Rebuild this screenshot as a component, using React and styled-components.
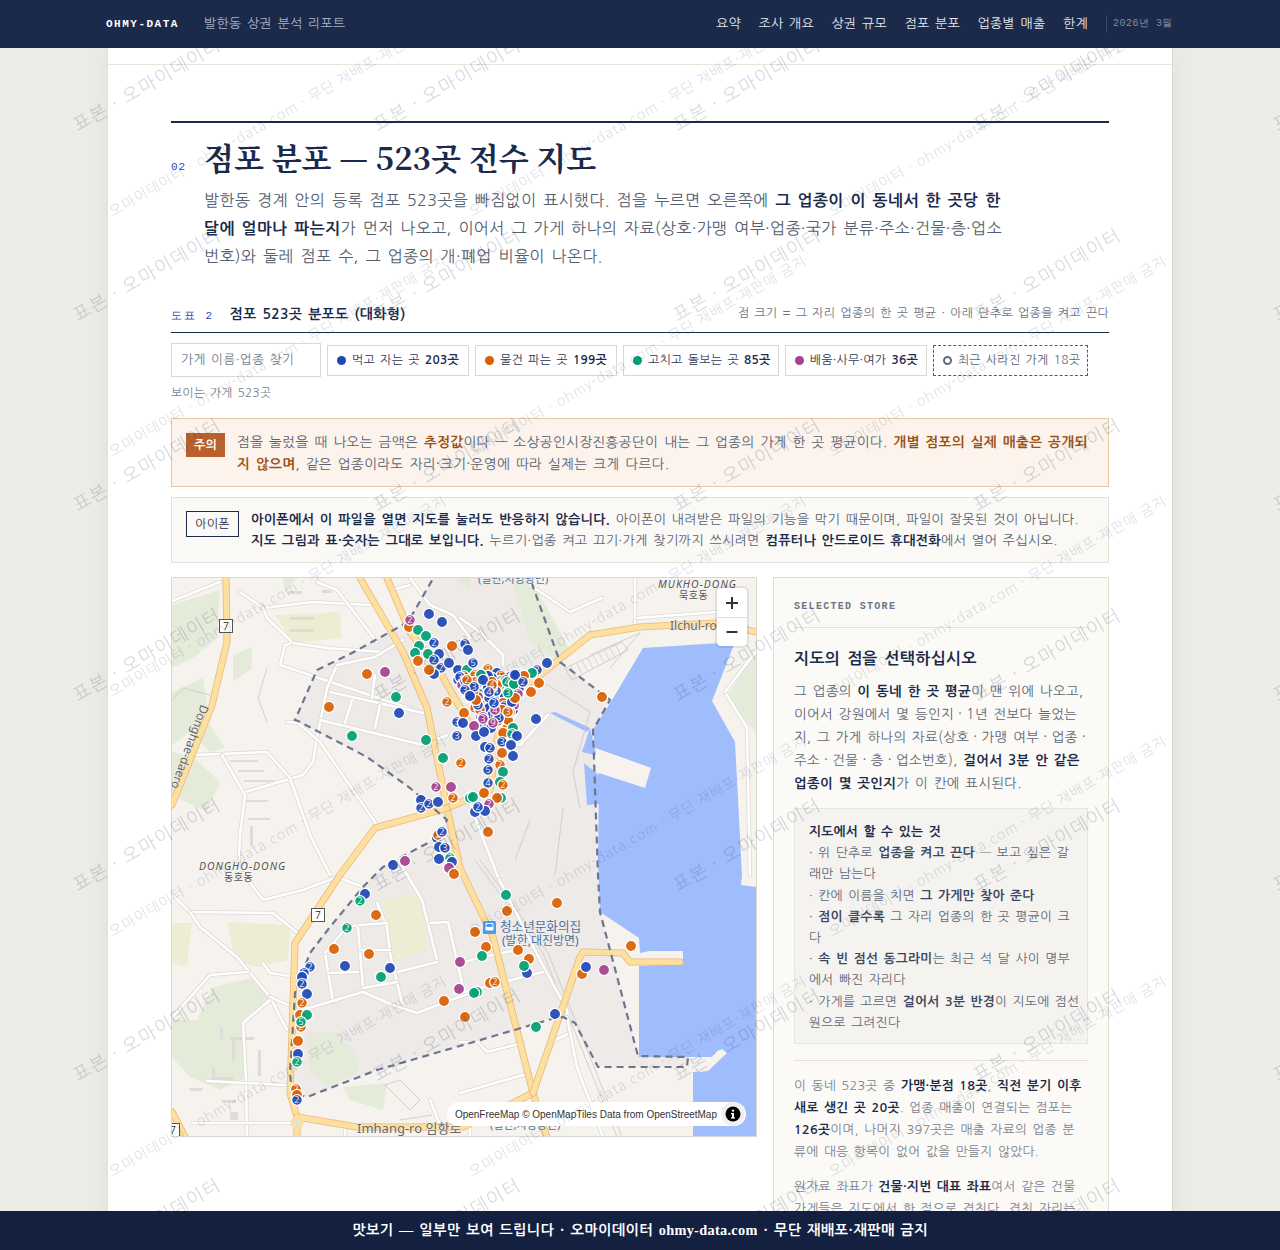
import React from 'react';
import styled, { createGlobalStyle } from 'styled-components';

const SANS = `"NanumGothic", "Liberation Sans", sans-serif`;
const SERIF = `"Liberation Serif", "NanumGothic", serif`;
const DISPLAY = `"Noto Serif CJK KR", "Liberation Serif", serif`;
const MONO = `"Liberation Mono", monospace`;

const NAVY = '#1b2a4a';
const COLORS = { b: '#1f48b6', o: '#d95f02', g: '#009e73', p: '#a6408f' };

const Global = createGlobalStyle`
	html, body {
		margin: 0;
		height: 100%;
		overflow: hidden;
		background: #eeece6;
		font-family: ${SANS};
		color: #4a5568;
	}
	* { box-sizing: border-box; }
	*:not(svg, svg *) {
		letter-spacing: 0.022em;
		word-spacing: 0.12em;
	}
	svg { letter-spacing: 0; word-spacing: 0; }
	b, strong { line-height: 1; }
`;

const TopBar = styled.header`
	position: relative;
	z-index: 60;
	height: 48px;
	background: ${NAVY};
	display: flex;
	align-items: center;
	padding: 0 107px 0 106px;
`;

const Brand = styled.div`
	font-family: ${MONO};
	font-weight: 700;
	font-size: 11px;
	letter-spacing: 1.5px;
	word-spacing: 0;
	color: #fff;
	width: 98px;
`;

const ReportName = styled.div`
	font-size: 13px;
	color: #a9b3c7;
	flex: 1;
`;

const Nav = styled.nav`
	display: flex;
	gap: 17.5px;
	font-size: 13px;
	color: #e3e7ef;
`;

const Issue = styled.div`
	font-family: ${MONO};
	font-size: 10px;
	letter-spacing: 0.5px;
	word-spacing: 0;
	color: #7f8aa3;
	margin-left: 18px;
	padding-left: 6px;
	border-left: 1px solid #3a4866;
	height: 18px;
	line-height: 18px;
	white-space: nowrap;
`;

const Sheet = styled.main`
	width: 1066px;
	margin: 0 auto;
	background: #fff;
	border-left: 1px solid #e2dfd6;
	border-right: 1px solid #dcd9d0;
	box-shadow: 0 0 30px rgba(40, 40, 30, 0.06);
	height: 1400px;
`;

const CoverStrip = styled.div`
	height: 17px;
	border-bottom: 1px solid #e8e4da;
`;

const Section = styled.section`
	margin: 56px 63px 0;
	border-top: 2px solid ${NAVY};
`;

const HeadRow = styled.div`
	display: flex;
	align-items: baseline;
	margin-top: 12px;
`;

const SecNo = styled.span`
	font-family: ${MONO};
	font-size: 11px;
	letter-spacing: 1px;
	color: #1f48b6;
	width: 33px;
`;

const Title = styled.h2`
	margin: 0;
	font-family: ${DISPLAY};
	font-size: 31px;
	line-height: 44px;
	font-weight: 700;
	letter-spacing: 0;
	word-spacing: 0;
	color: ${NAVY};
`;

const Lead = styled.p`
	margin: 7px 0 0 33px;
	width: 804px;
	font-size: 16px;
	line-height: 28px;
	color: #555f70;
	b { color: ${NAVY}; font-weight: 700; }
`;

const FigHead = styled.div`
	display: flex;
	align-items: center;
	justify-content: space-between;
	margin-top: 29px;
	height: 34px;
	padding-bottom: 5px;
	border-bottom: 1px solid ${NAVY};
`;

const FigNo = styled.span`
	font-family: ${MONO};
	font-size: 11px;
	letter-spacing: 1.5px;
	color: #1f48b6;
	margin-right: 16px;
`;

const FigTitle = styled.span`
	font-size: 14px;
	font-weight: 700;
	color: ${NAVY};
`;

const FigNote = styled.span`
	font-size: 12px;
	color: #6b7484;
`;

const Controls = styled.div`
	display: flex;
	align-items: center;
	gap: 6px;
	margin-top: 10px;
`;

const Search = styled.input`
	width: 150px;
	height: 34px;
	padding: 0 9px;
	border: 1px solid #dcd8cf;
	background: #fff;
	font-family: ${SANS};
	font-size: 12.8px;
	&::placeholder { color: #757d8b; }
`;

const Chip = styled.button`
	display: flex;
	align-items: center;
	gap: 6px;
	min-width: 142px;
	height: 31px;
	padding: 0 7px 0 9px;
	border: 1px ${p => (p.$dashed ? 'dashed #4f5a70' : 'solid #dcd8cf')};
	background: #fff;
	font-family: ${SANS};
	font-size: 12px;
	color: ${p => (p.$dashed ? '#5a6475' : '#2b3854')};
	white-space: nowrap;
`;

const Count = styled.strong`
	font-weight: 700;
	color: ${NAVY};
`;

const Dot = styled.i`
	width: 9px;
	height: 9px;
	border-radius: 50%;
	background: ${p => p.$color};
`;

const RingDot = styled.i`
	width: 9px;
	height: 9px;
	border-radius: 50%;
	border: 2px solid #606a7d;
`;

const Visible = styled.div`
	margin-top: 8px;
	font-size: 11.8px;
	line-height: 16px;
	color: #7a8290;
`;

const Notice = styled.div`
	display: flex;
	align-items: flex-start;
	gap: 12px;
	padding: 11px 14px;
	padding-top: ${p => (p.$warn ? '12px' : '11px')};
	border: 1px solid ${p => (p.$warn ? '#e6c8a8' : '#e5e1d8')};
	background: ${p => (p.$warn ? '#fbf3ec' : '#faf9f6')};
	font-size: ${p => (p.$warn ? '13.7px' : '13.15px')};
	line-height: ${p => (p.$warn ? '22px' : '21px')};
	margin-top: ${p => (p.$warn ? '17px' : '10px')};
	color: #5a6373;
	b { font-weight: 700; color: ${p => (p.$warn ? '#9a4f14' : NAVY)}; }
`;

const WarnTag = styled.span`
	flex: none;
	margin-top: 2px;
	width: 39px;
	height: 24px;
	line-height: 24px;
	text-align: center;
	background: #b8612c;
	color: #fff;
	font-weight: 700;
	font-size: 12px;
`;

const PhoneTag = styled.span`
	flex: none;
	margin-top: 2px;
	width: 53px;
	height: 26px;
	line-height: 24px;
	text-align: center;
	border: 1px solid ${NAVY};
	color: ${NAVY};
	font-size: 12px;
`;

const Grid = styled.div`
	display: grid;
	grid-template-columns: 586px 336px;
	gap: 16px;
	margin-top: 14px;
	align-items: start;
`;

const MapFrame = styled.div`
	position: relative;
	width: 586px;
	height: 560px;
	border: 1px solid #dcd8cf;
	overflow: hidden;
	background: #f6f3ef;
	svg { display: block; }
`;

const ZoomBox = styled.div`
	position: absolute;
	top: 10px;
	right: 9px;
	width: 30px;
	background: #fff;
	border-radius: 4px;
	box-shadow: 0 0 0 2px rgba(0, 0, 0, 0.08);
`;

const ZoomBtn = styled.div`
	height: 29px;
	display: flex;
	align-items: center;
	justify-content: center;
	& + & { border-top: 1px solid #ddd; }
`;

const Attribution = styled.div`
	position: absolute;
	right: 10px;
	bottom: 10px;
	display: flex;
	align-items: center;
	height: 24px;
	padding: 0 1px 0 8px;
	border-radius: 12px;
	background: #fff;
	font-family: "Liberation Sans", sans-serif;
	font-size: 10px;
	letter-spacing: 0;
	word-spacing: 0;
	color: #333;
	white-space: nowrap;
`;

const InfoBtn = styled.span`
	width: 24px;
	height: 24px;
	margin-left: 4px;
	border-radius: 50%;
	background: #f0f0f0;
	display: flex;
	align-items: center;
	justify-content: center;
`;

const Panel = styled.aside`
	padding: 23px 20px 30px;
	border: 1px solid #e0dccf;
	background: #fbfaf7;
`;

const PanelLabel = styled.div`
	font-family: ${MONO};
	font-size: 10px;
	font-weight: 700;
	letter-spacing: 1.3px;
	word-spacing: 0;
	color: #6c7588;
	padding-bottom: 15px;
	border-bottom: 1px solid #e4e0d6;
`;

const PanelTitle = styled.h3`
	margin: 20px 0 10px;
	font-size: 16px;
	line-height: 22px;
	font-weight: 700;
	color: ${NAVY};
`;

const PanelText = styled.p`
	margin: 0 -1px 13px 0;
	font-size: 13.5px;
	line-height: 23px;
	color: #5f6878;
	b { font-weight: 700; color: ${NAVY}; }
`;

const Sep = styled.span`
	word-spacing: 0;
`;

const Tips = styled.div`
	padding: 12px 14px 10px;
	border: 1px solid #e8e6e0;
	background: #f4f3f0;
	font-size: 12.75px;
	line-height: 21.2px;
	color: #5f6878;
	margin-bottom: 16px;
	b { font-weight: 700; color: #3c4760; }
`;

const TipsTitle = styled.div`
	font-weight: 700;
	color: ${NAVY};
`;

const TipLong = styled.div`
	white-space: nowrap;
`;

const Divider = styled.hr`
	margin: 0 0 14px;
	border: 0;
	border-top: 1px solid #e4e0d6;
`;

const NoteText = styled.p`
	margin: 0 0 13px;
	padding-right: 4px;
	font-size: 12.75px;
	line-height: 22px;
	color: #7a8290;
	b { font-weight: 700; color: ${NAVY}; }
`;

const Preview = styled.footer`
	position: fixed;
	left: 0;
	right: 0;
	bottom: 0;
	z-index: 60;
	height: 39px;
	background: #13203f;
	display: flex;
	align-items: center;
	justify-content: center;
	font-family: ${SERIF};
	font-size: 14.3px;
	font-weight: 700;
	color: #fff;
`;

const Overlay = styled.svg`
	position: fixed;
	left: 0;
	top: 0;
	z-index: 50;
	pointer-events: none;
`;

const Watermark = () => (
	<Overlay width="1280" height="1250">
		<defs>
			<pattern id="wm-big" patternUnits="userSpaceOnUse" width="300" height="190">
				<text x="78" y="132" transform="rotate(-30 78 132)" fontFamily={SANS} fontSize="18" letterSpacing="1.5" fill="#1b2a4a" fillOpacity="0.18">표본 · 오마이데이터</text>
			</pattern>
			<pattern id="wm-small" patternUnits="userSpaceOnUse" x="100" width="360" height="240">
				<text x="13" y="217" transform="rotate(-30 13 217)" fontFamily={SANS} fontSize="14" letterSpacing="1" fill="#1b2a4a" fillOpacity="0.15">오마이데이터 · ohmy-data.com · 무단 재배포·재판매 금지</text>
			</pattern>
		</defs>
		<rect x="107" width="1066" height="1250" fill="url(#wm-small)" />
		<rect width="1280" height="1250" fill="url(#wm-big)" />
	</Overlay>
);

// map geometry, all in page coordinates (the viewBox takes care of the offset)
const SHORE = '643,648 735,642 712,701 735,742 742,875 741,885 757,887 757,1137 693,1137 693,1072 708,1071 727,1053 718,1050 715,1057 639,1057 639,966 680,964 683,958 683,951 650,951 640,953 639,938 600,912 598,860 599,773 651,768 595,748 593,730 612,700';
const WATER_BITS = ['550,713 555,712 590,728 587,732', '590,728 582,752 604,757 604,755 595,748', '584,763 587,805 599,804 599,775'];
const PIER = '595,748 651,768 645,788 599,773';
const BOUNDARY = '438,570 408,622 352,653 317,670 295,720 298,721 367,757 410,788 447,820 437,838 383,867 363,887 330,927 310,953 295,993 290,1073 292,1093 307,1097 377,1070 470,1043 555,1018 563,1017 575,1023 598,1067 687,1067 688,1057 638,1056 600,912 598,875 593,730 610,700 560,662 527,570';

const GREENS = [
	'172,605 220,590 217,638 193,658 172,668', '233,655 252,647 252,668 233,682',
	'172,692 203,678 210,725 225,748 210,752 190,732 172,745', '172,752 193,757 220,782 207,812 172,795',
	'213,987 257,977 270,997 243,1020 247,1077 220,1090 190,1077 172,1057 172,1020 197,1020',
	'307,1033 337,1032 357,1057 357,1073 330,1087 310,1073', '343,1087 387,1083 383,1110 350,1100',
	'513,585 530,578 548,610 570,650 555,660 530,640', '283,578 297,578 285,592', '455,578 470,578 470,592',
	'728,695 757,650 757,735 745,720',
];
const PARKS = [
	'275,615 340,612 342,638 293,643', '227,922 290,925 288,960 257,967 235,960', '172,923 192,923 187,967 172,963',
	'383,900 420,893 428,950 393,962',
];
const MINOR = [
	'170,602 220,582', '240,592 263,608 313,602 370,605', '263,608 267,618 293,643 285,645 280,665 423,713',
	'293,643 327,648 383,652 403,638', '317,582 337,590 377,642', '410,578 430,605 453,615 470,638', '392,590 410,585',
	'337,665 327,688 317,738 313,762 303,775 245,792', '330,692 423,713', '320,720 423,745 447,735',
	'287,722 298,723 320,742 377,825', '193,755 220,754 267,752 290,778 310,835 330,875', '222,755 245,795 240,835 238,875',
	'352,700 345,723', '380,705 375,728', '375,675 372,698', '337,665 375,657 403,640',
	'170,893 190,912 273,913 300,935', '190,912 200,927 237,957 270,997 287,1030', '270,997 288,1005',
	'270,1000 243,1023 246,1080 247,1137', '170,1020 210,975 248,972', '207,1081 285,1085', '193,1123 290,1123',
	'243,873 263,900 303,890 337,877 363,887', '263,963 270,973 290,976', '400,863 422,900 437,960',
	'430,923 448,922 463,987', '437,962 397,972', '377,903 387,927 390,953 402,1003', '325,953 333,1002',
	'325,953 347,927 360,925 387,923', '358,927 363,988', '328,973 358,972', '360,950 390,950', '363,988 397,982',
	'302,1010 363,992 393,1005 417,1013 470,993', '498,877 540,960 567,1010 570,1033 555,1040',
	'567,1017 577,1067 603,1137', '460,963 483,957 517,950', '460,993 500,983 543,972', '460,1042 478,1042 487,1052 523,1043',
	'460,1093 530,1073', '530,585 570,612 602,598', '460,618 480,632 503,655 503,665', '548,715 520,745 505,738',
	'635,578 635,625', '637,618 717,612', '725,692 747,728 750,875', '757,650 725,692', '470,805 498,877',
	'470,1137 470,1125', '345,1125 345,1137', '430,1100 440,1125',
];
const PATHS = [
	'267,668 258,698 267,722', '170,702 183,688 210,695', '543,682 590,712 573,772 580,808', '563,808 555,875',
	'565,668 622,642 628,650 572,680 565,668', '590,655 640,633', '640,633 625,650 610,668', '410,1110 385,1085 400,1080 420,1100 410,1110',
	'475,860 543,953 573,1027 617,1137', '480,860 548,953 578,1027 622,1137', '515,860 530,820', '400,1120 432,1115',
];
const MAJOR = [
	'226,578 227,642 212,705 172,805', '360,578 403,652 427,708 447,808 460,868 493,937 533,1093 547,1137',
	'387,578 410,632 440,672 470,725',
	'447,808 490,790 497,740 505,700 540,675 590,635 640,627 717,623 757,632',
	'447,808 375,828 340,875 295,943 290,1093 297,1117 297,1137',
	'172,1112 185,1137', '297,1117 357,1127 463,1127 517,1101 533,1093', '533,1093 580,957 583,952 623,953 630,962 680,962',
];
const BUILDINGS = [
	[290, 617, 24, 3], [290, 629, 24, 3], [230, 760, 28, 2], [238, 770, 26, 2], [244, 780, 30, 2], [246, 800, 22, 2], [248, 818, 22, 2],
	[250, 826, 3, 20], [220, 1027, 3, 12], [212, 1067, 3, 14], [232, 1040, 3, 20], [258, 1050, 3, 26], [215, 1077, 18, 3], [190, 1088, 12, 3], [222, 1100, 14, 3], [230, 1112, 8, 8],
	[230, 1037, 24, 3], [288, 591, 14, 3], [322, 590, 10, 3],
];
const HATCH = Array.from({ length: 9 }, (_, i) => i);

const DOTS = [
	['b',429,614],['b',442,622],['o',409,627],['p',410,620,2],['g',418,630],['g',426,636],['g',419,646],['g',415,653],['g',428,654],['o',418,661],
	['b',434,643,2],['b',439,654],['o',452,646],['b',465,644,2],['b',468,650],['b',434,660,2],['b',441,668,2],['b',449,663],['b',434,674],['o',429,670],
	['b',458,670],['g',467,670],['b',473,663,5],['o',488,669,9],['b',497,673],['b',547,663],['b',537,670,2],['g',532,673],['o',539,683],['o',531,692],['b',523,682,2],
	['b',536,719],['o',602,697],['b',399,713],['o',367,674],['p',385,672],['o',329,707],['g',396,697],['g',352,736],['g',426,740],['g',443,758],
	['o',447,702,2],['o',464,713],['b',457,722,3],['b',463,723],['b',457,736,3],['o',461,763,2],['p',436,787,2],['p',451,787],['o',453,798,2],['g',470,798],
	['b',421,800],['b',421,808,2],['b',429,804,2],['b',438,802],['b',437,838],['o',438,835,2],['b',442,832,2],['b',439,847],['b',445,848,3],['b',439,859],['g',450,858,2],['b',452,862],
	['b',393,865],['p',405,861],['p',449,868],['o',454,874],
	['p',474,726],['b',476,736],['b',484,732],['p',493,723,9],['g',513,728],['o',503,733],['g',512,734,2],['b',517,736],['b',502,742,3],['b',485,747],['b',490,748,2],['b',511,745],
	['o',502,753],['b',513,756],['b',489,759,2],['b',488,770,5],['o',500,765,2],['g',503,772],['b',488,783,4],['g',500,782],['o',503,785,2],['o',484,793],['g',473,797],['g',501,798],['o',497,798],
	['p',489,804,2],['b',475,812],['b',485,811],['b',478,807,2],['o',488,832],
	['b',365,894],['g',360,901,2],['o',376,915],['g',347,928,2],['o',334,949],['o',369,954],['b',345,966],['b',390,968],['g',381,977],['p',460,962],['p',459,989],['o',444,1001],['o',465,1017],
	['b',310,967,2],['b',304,973,5],['b',302,977],['b',302,984,2],['b',307,994],['o',302,1003,2],['o',300,1015],['g',307,1015],['o',301,1027,2],['g',301,1022,5],['o',298,1041],['b',298,1054],['g',297,1062,2],['o',296,1089,2],['o',297,1095],['b',297,1100,2],
	['g',506,895],['o',557,903],['o',507,911],['o',475,932],['o',486,947],['g',482,956],['o',518,950],['b',527,973],['o',529,959],['g',524,966],['o',582,974],['b',586,967],['p',604,970],['o',631,946],
	['o',490,983],['o',495,982,2],['g',477,992],['g',474,993],['b',555,1014],['g',536,1027],
];

// the packed part of the cluster is scattered, nobody reads single dots there
const clusterDots = () => {
	let s = 7321;
	const rnd = () => {
		s = (s * 16807) % 2147483647;
		return s / 2147483647;
	};
	const out = [];
	while (out.length < 160) {
		const x = 450 + rnd() * 76;
		const y = 674 + rnd() * 54;
		const top = 672 + Math.abs(x - 490) * 0.05;
		const left = 455 + (y - 674) * 0.55;
		const right = 526 - (y - 674) * 0.35;
		if (y < top || x < left || x > right) continue;
		const c = rnd();
		const kind = c < 0.55 ? 'b' : c < 0.8 ? 'o' : c < 0.93 ? 'g' : 'p';
		const badge = rnd() < 0.55 ? 2 + Math.floor(rnd() * 4) : undefined;
		out.push([kind, Math.round(x), Math.round(y), badge]);
	}
	return out;
};
const ALL_DOTS = [...DOTS.slice(0, 30), ...clusterDots(), ...DOTS.slice(30)];

const Road = ({ points, casing, fill, width }) => (
	<g fill="none" strokeLinecap="round" strokeLinejoin="round">
		<polyline points={points} stroke={casing} strokeWidth={width + 1.6} />
		<polyline points={points} stroke={fill} strokeWidth={width} />
	</g>
);

const Shield = ({ x, y }) => (
	<g>
		<rect x={x - 6.5} y={y - 6.5} width="13" height="13" fill="#fff" stroke="#555" />
		<text x={x} y={y + 4} textAnchor="middle" fontFamily={SANS} fontSize="10.5" fill="#222">7</text>
	</g>
);

const MapDot = ({ kind, x, y, n }) => (
	<g>
		<circle cx={x} cy={y} r={n ? 5.4 : 5.6} fill={COLORS[kind]} fillOpacity="0.92" stroke="#fff" strokeWidth="1.3" />
		{n && <text x={x} y={y + 3.2} textAnchor="middle" fontFamily={SANS} fontSize="9" fill="#fff">{n}</text>}
	</g>
);

const MapLabel = ({ x, y, size = 10, color = '#555', italic, spacing = 0, anchor = 'start', rotate, children }) => (
	<text
		x={x}
		y={y}
		fontFamily={`"Noto Sans", "Noto Sans CJK KR", sans-serif`}
		fontSize={size}
		fill={color}
		fontStyle={italic ? 'italic' : 'normal'}
		letterSpacing={spacing}
		textAnchor={anchor}
		transform={rotate ? `rotate(${rotate} ${x} ${y})` : undefined}
		stroke="#f6f3ef"
		strokeWidth="0.6"
		paintOrder="stroke"
	>
		{children}
	</text>
);

const MapArt = () => (
	<svg width="584" height="558" viewBox="172 578 584 558">
		<rect x="172" y="578" width="584" height="558" fill="#f6f3ef" />
		<polygon points={BOUNDARY} fill="#edeae7" />
		{GREENS.map(p => <polygon key={p} points={p} fill="#e5ebd9" />)}
		{PARKS.map(p => <polygon key={p} points={p} fill="#ecedd2" />)}
		{BUILDINGS.map(([x, y, w, h]) => <rect key={`${x}-${y}`} x={x} y={y} width={w} height={h} fill="#dfdcd7" />)}
		<polygon points={SHORE} fill="#9fbdfd" />
		{WATER_BITS.map(p => <polygon key={p} points={p} fill="#9fbdfd" />)}
		<polygon points={PIER} fill="#f6f3ef" />
		<polygon points="727,1053 722,1049 716,1052 711,1058 708,1071 693,1072 693,1058 715,1057" fill="#f6f3ef" />
		{PATHS.map(p => <polyline key={p} points={p} fill="none" stroke="#cfcbc5" strokeWidth="0.9" />)}
		{HATCH.map(i => <line key={i} x1={571 + i * 5.6} y1={666 - i * 2.6} x2={576 + i * 5.6} y2={676 - i * 2.6} stroke="#cfcbc5" strokeWidth="0.8" />)}
		{MINOR.map(p => <Road key={p} points={p} casing="#dedad4" fill="#fff" width={2.6} />)}
		{MAJOR.map(p => <Road key={p} points={p} casing="#ecb878" fill="#fddf9f" width={5.5} />)}
		<circle cx="297" cy="1123" r="5" fill="#dfe6cf" stroke="#fddf9f" strokeWidth="3" />
		<polyline points={BOUNDARY} fill="none" stroke="#6d7690" strokeWidth="2.2" strokeDasharray="7 5" />
		<Shield x={226} y={626} />
		<Shield x={318} y={915} />
		<Shield x={173} y={1130} />
		<MapLabel x={199} y={870} size={10.5} italic spacing={1} color="#555">DONGHO-DONG</MapLabel>
		<MapLabel x={224} y={881} size={10} spacing={0.5} color="#555">동호동</MapLabel>
		<MapLabel x={658} y={588} size={10.5} italic spacing={1} color="#555">MUKHO-DONG</MapLabel>
		<MapLabel x={679} y={599} size={10} spacing={0.5} color="#555">묵호동</MapLabel>
		<MapLabel x={670} y={630} size={12} color="#666">Ilchul-ro</MapLabel>
		<MapLabel x={201} y={704} size={12} color="#666" rotate={110}>Donghae-daero</MapLabel>
		<MapLabel x={357} y={1133} size={13} color="#666">Imhang-ro 임항로</MapLabel>
		<MapLabel x={478} y={583} size={11} color="#4a719f">(일반,시영방면)</MapLabel>
		<MapLabel x={490} y={1129} size={11} color="#4a719f">(일반,시영방면)</MapLabel>
		<MapLabel x={500} y={931} size={12.6} color="#4a719f">청소년문화의집</MapLabel>
		<MapLabel x={502} y={945} size={12} color="#4a719f">(발한,대진방면)</MapLabel>
		<rect x="483" y="921" width="13" height="13" rx="1.5" fill="#4b9bea" />
		<rect x="485.5" y="923" width="8" height="7.5" rx="1" fill="#fff" />
		<rect x="486.5" y="924" width="6" height="3" fill="#4b9bea" />
		{ALL_DOTS.map(([kind, x, y, n], i) => <MapDot key={i} kind={kind} x={x} y={y} n={n} />)}
	</svg>
);

const MapBlock = () => (
	<MapFrame>
		<MapArt />
		<ZoomBox>
			<ZoomBtn>
				<svg width="14" height="14" viewBox="0 0 14 14"><path d="M6 1h2v5h5v2H8v5H6V8H1V6h5z" fill="#333" /></svg>
			</ZoomBtn>
			<ZoomBtn>
				<svg width="14" height="14" viewBox="0 0 14 14"><path d="M1.5 6h11v2h-11z" fill="#333" /></svg>
			</ZoomBtn>
		</ZoomBox>
		<Attribution>
			OpenFreeMap © OpenMapTiles Data from OpenStreetMap
			<InfoBtn>
				<svg width="16" height="16" viewBox="0 0 16 16">
					<circle cx="8" cy="8" r="7.5" fill="#000" />
					<rect x="7" y="7" width="2" height="5" fill="#fff" />
					<rect x="6" y="11.4" width="4" height="1.2" fill="#fff" />
					<rect x="6" y="7" width="2" height="1.2" fill="#fff" />
					<circle cx="8" cy="4.6" r="1.2" fill="#fff" />
				</svg>
			</InfoBtn>
		</Attribution>
	</MapFrame>
);

export default function App() {
	return (
		<>
			<Global />
			<TopBar>
				<Brand>OHMY-DATA</Brand>
				<ReportName>발한동 상권 분석 리포트</ReportName>
				<Nav>
					<span>요약</span>
					<span>조사 개요</span>
					<span>상권 규모</span>
					<span>점포 분포</span>
					<span>업종별 매출</span>
					<span>한계</span>
				</Nav>
				<Issue>2026년 3월</Issue>
			</TopBar>

			<Sheet>
				<CoverStrip />
				<Section>
					<HeadRow>
						<SecNo>02</SecNo>
						<Title>점포 분포 — 523곳 전수 지도</Title>
					</HeadRow>
					<Lead>
						발한동 경계 안의 등록 점포 523곳을 빠짐없이 표시했다. 점을 누르면 오른쪽에 <b>그 업종이 이 동네서 한 곳당 한 달에 얼마나 파는지</b>가 먼저 나오고, 이어서 그 가게 하나의 자료(상호·가맹 여부·업종·국가 분류·주소·건물·층·업소번호)와 둘레 점포 수, 그 업종의 개·폐업 비율이 나온다.
					</Lead>

					<FigHead>
						<span>
							<FigNo>도표 2</FigNo>
							<FigTitle>점포 523곳 분포도 (대화형)</FigTitle>
						</span>
						<FigNote>점 크기 = 그 자리 업종의 한 곳 평균 · 아래 단추로 업종을 켜고 끈다</FigNote>
					</FigHead>

					<Controls>
						<Search placeholder="가게 이름·업종 찾기" />
						<Chip><Dot $color={COLORS.b} /><span>먹고 자는 곳 <Count>203곳</Count></span></Chip>
						<Chip><Dot $color={COLORS.o} /><span>물건 파는 곳 <Count>199곳</Count></span></Chip>
						<Chip><Dot $color={COLORS.g} /><span>고치고 돌보는 곳 <Count>85곳</Count></span></Chip>
						<Chip><Dot $color={COLORS.p} /><span>배움·사무·여가 <Count>36곳</Count></span></Chip>
						<Chip $dashed><RingDot />최근 사라진 가게 18곳</Chip>
					</Controls>
					<Visible>보이는 가게 523곳</Visible>

					<Notice $warn>
						<WarnTag>주의</WarnTag>
						<div>
							점을 눌렀을 때 나오는 금액은 <b>추정값</b>이다 — 소상공인시장진흥공단이 내는 그 업종의 가게 한 곳 평균이다. <b>개별 점포의 실제 매출은 공개되지 않으며</b>, 같은 업종이라도 자리·크기·운영에 따라 실제는 크게 다르다.
						</div>
					</Notice>
					<Notice>
						<PhoneTag>아이폰</PhoneTag>
						<div>
							<b>아이폰에서 이 파일을 열면 지도를 눌러도 반응하지 않습니다.</b> 아이폰이 내려받은 파일의 기능을 막기 때문이며, 파일이 잘못된 것이 아닙니다. <b>지도 그림과 표·숫자는 그대로 보입니다.</b> 누르기·업종 켜고 끄기·가게 찾기까지 쓰시려면 <b>컴퓨터나 안드로이드 휴대전화</b>에서 열어 주십시오.
						</div>
					</Notice>

					<Grid>
						<MapBlock />
						<Panel>
							<PanelLabel>SELECTED STORE</PanelLabel>
							<PanelTitle>지도의 점을 선택하십시오</PanelTitle>
							<PanelText>
								그 업종의 <b>이 동네 한 곳 평균</b>이 맨 위에 나오고, 이어서 강원에서 몇 등인지<Sep> · </Sep>1년 전보다 늘었는지, 그 가게 하나의 자료(상호<Sep> · </Sep>가맹 여부<Sep> · </Sep>업종<Sep> · </Sep>주소<Sep> · </Sep>건물<Sep> · </Sep>층<Sep> · </Sep>업소번호), <b>걸어서 3분 안 같은 업종이 몇 곳인지</b>가 이 칸에 표시된다.
							</PanelText>
							<Tips>
								<TipsTitle>지도에서 할 수 있는 것</TipsTitle>
								<div>· 위 단추로 <b>업종을 켜고 끈다</b> — 보고 싶은 갈래만 남는다</div>
								<div>· 칸에 이름을 치면 <b>그 가게만 찾아 준다</b></div>
								<div>· <b>점이 클수록</b> 그 자리 업종의 한 곳 평균이 크다</div>
								<div>· <b>속 빈 점선 동그라미</b>는 최근 석 달 사이 명부에서 빠진 자리다</div>
								<TipLong>· 가게를 고르면 <b>걸어서 3분 반경</b>이 지도에 점선<br />원으로 그려진다</TipLong>
							</Tips>
							<Divider />
							<NoteText>
								이 동네 523곳 중 <b>가맹·분점 18곳</b>, <b>직전 분기 이후 새로 생긴 곳 20곳</b>. 업종 매출이 연결되는 점포는 <b>126곳</b>이며, 나머지 397곳은 매출 자료의 업종 분류에 대응 항목이 없어 값을 만들지 않았다.
							</NoteText>
							<NoteText>
								원자료 좌표가 <b>건물·지번 대표 좌표</b>여서 같은 건물 가게들은 지도에서 한 점으로 겹친다. 겹친 자리는 점 안에 숫자로 표시했다.
							</NoteText>
						</Panel>
					</Grid>
				</Section>
			</Sheet>

			<Watermark />
			<Preview>맛보기 — 일부만 보여 드립니다 · 오마이데이터 ohmy-data.com · 무단 재배포·재판매 금지</Preview>
		</>
	);
}
